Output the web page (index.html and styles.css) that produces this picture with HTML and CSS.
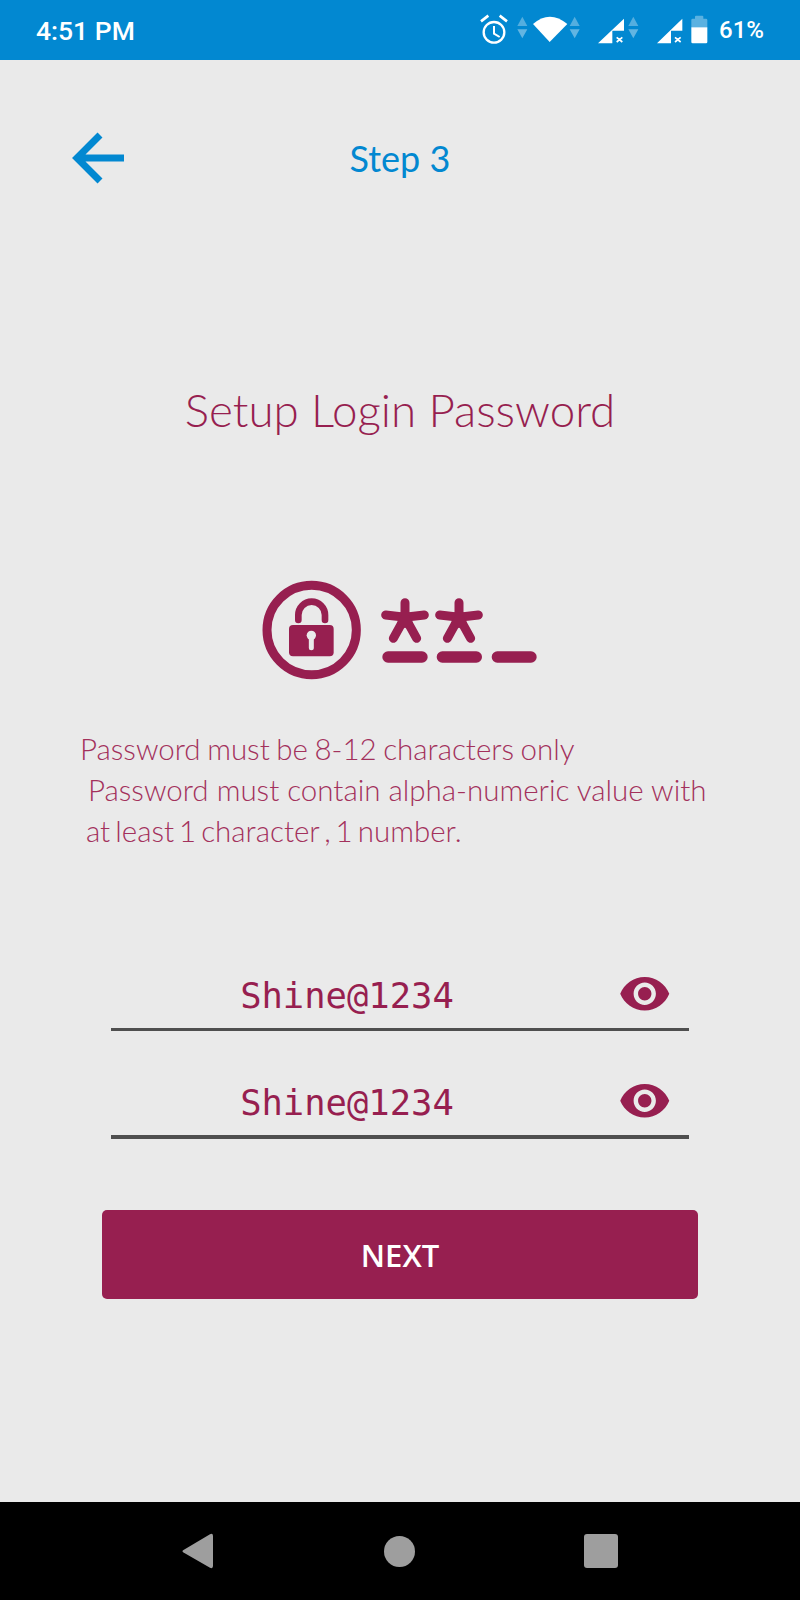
FILE: index.html
```html
<!DOCTYPE html>
<html lang="en">
<head>
<meta charset="utf-8">
<title>Setup Login Password</title>
<link rel="stylesheet" href="styles.css">
</head>
<body>
<div class="phone">
  <div class="status">
    <span class="time">4:51 PM</span>
    <div class="status-right">
      <svg class="status-icons" viewBox="60 0 700 180" aria-hidden="true">
        <g fill="none" stroke="#fff" stroke-width="7">
          <circle cx="105" cy="97" r="31"/>
          <path d="M105 78V101L122 111" stroke-width="6"/>
          <path d="M66 64L88 47M122 47L144 64" stroke-width="8"/>
        </g>
        <g fill="#fff">
          <g opacity=".32"><path d="M190 50L175 78H205Z"/><path d="M347 50L332 78H362Z"/><path d="M523 50L508 78H538Z"/></g>
          <g opacity=".38"><path d="M175 88H205L190 115Z"/><path d="M332 88H362L347 115Z"/><path d="M508 88H538L523 115Z"/></g>
          <path d="M222 72Q272 28 325 72L272 126Z"/>
          <path d="M417 130L495 56V92H460V130Z"/>
          <path d="M594 130L670 56V92H636V130Z"/>
          <path d="M708 56V50Q708 47 711 47H730Q733 47 733 50V56H741Q745 56 745 60V82H697V60Q697 56 701 56Z" opacity=".35"/>
          <path d="M697 82H745V126Q745 130 741 130H701Q697 130 697 126Z"/>
        </g>
        <path d="M473 112L490 126M490 112L473 126M648 112L665 126M665 112L648 126" stroke="#fff" stroke-width="5" fill="none"/>
      </svg>
      <span class="battery">61%</span>
    </div>
  </div>

  <main class="screen">
    <header class="topbar">
      <svg class="back" viewBox="0 0 52 52" aria-hidden="true">
        <path d="M28 3L5 26L28 49M5 26H52" fill="none" stroke="#0288d1" stroke-width="7"/>
      </svg>
      <span class="step">Step 3</span>
    </header>

    <h1 class="title">Setup Login Password</h1>

    <svg class="hero" viewBox="60 60 840 300" aria-hidden="true">
      <circle cx="215" cy="210" r="134" fill="none" stroke="#971f50" stroke-width="27"/>
      <path d="M175 180V165A40 40 0 0 1 255 165V180" fill="none" stroke="#971f50" stroke-width="20" stroke-linecap="round"/>
      <rect x="147" y="195" width="134" height="94" rx="12" fill="#971f50"/>
      <circle cx="214" cy="226" r="14" fill="#eaeaea"/>
      <path d="M214 230V263" stroke="#eaeaea" stroke-width="15" stroke-linecap="round"/>
      <g fill="none" stroke="#971f50" stroke-width="27" stroke-linecap="round">
        <path d="M495 128V172M437 165L495 172L553 165M460 235L495 172L530 235"/>
        <path d="M657 128V172M599 165L657 172L715 165M622 235L657 172L692 235"/>
      </g>
      <g fill="#971f50">
        <path d="M485 165H505L519 188L495 205L471 188Z"/>
        <path d="M647 165H667L681 188L657 205L633 188Z"/>
        <rect x="427" y="274" width="136" height="34" rx="17"/>
        <rect x="590" y="274" width="136" height="34" rx="17"/>
        <rect x="755" y="274" width="135" height="34" rx="17"/>
      </g>
    </svg>

    <div class="rules">
      <p class="rule rule-first">Password must be 8-12 characters only</p>
      <p class="rule rule-a">Password must contain alpha-numeric value with</p>
      <p class="rule rule-b">at least 1 character , 1 number.</p>
    </div>

    <div class="field field-first">
      <span class="value">Shine@1234</span>
      <svg class="eye" viewBox="0 0 24 24" aria-hidden="true"><path d="M12 4.5C7 4.5 2.73 7.61 1 12c1.73 4.39 6 7.5 11 7.5s9.27-3.11 11-7.5c-1.73-4.39-6-7.5-11-7.5zM12 17c-2.76 0-5-2.24-5-5s2.24-5 5-5 5 2.24 5 5-2.24 5-5 5zm0-8c-1.66 0-3 1.34-3 3s1.34 3 3 3 3-1.34 3-3-1.34-3-3-3z"/></svg>
    </div>
    <div class="field field-second">
      <span class="value">Shine@1234</span>
      <svg class="eye" viewBox="0 0 24 24" aria-hidden="true"><path d="M12 4.5C7 4.5 2.73 7.61 1 12c1.73 4.39 6 7.5 11 7.5s9.27-3.11 11-7.5c-1.73-4.39-6-7.5-11-7.5zM12 17c-2.76 0-5-2.24-5-5s2.24-5 5-5 5 2.24 5 5-2.24 5-5 5zm0-8c-1.66 0-3 1.34-3 3s1.34 3 3 3 3-1.34 3-3-1.34-3-3-3z"/></svg>
    </div>

    <button class="next" type="button">NEXT</button>
  </main>

  <nav class="navbar">
    <svg class="nav-back" viewBox="0 0 32 36" aria-hidden="true"><path d="M1.5 17L28 1.2Q31 0 31 3V33Q31 36 28 34.800L1.500 19.500Q-.5 18 1.500 17Z"/></svg>
    <span class="nav-home"></span>
    <span class="nav-recent"></span>
  </nav>
</div>
</body>
</html>
```
FILE: styles.css
```css
* { box-sizing: border-box; }
html, body { margin: 0; padding: 0; }
body { background: #eaeaea; }

.phone {
  width: 800px;
  height: 1600px;
  display: flex;
  flex-direction: column;
  overflow: hidden;
  font-family: Lato, "Liberation Sans", sans-serif;
}

.status {
  height: 60px;
  flex: none;
  background: #0288d1;
  color: #fff;
  display: flex;
  align-items: center;
  justify-content: space-between;
  padding: 0 36px;
  font-family: Roboto, sans-serif;
}
.time { font-size: 26.5px; font-weight: 500; }
.status-right { display: flex; align-items: center; }
.status-icons { width: 233.33px; height: 60px; display: block; margin-right: 7px; }
.battery { font-size: 24px; font-weight: 500; }

.screen {
  flex: 1;
  display: flex;
  flex-direction: column;
  align-items: center;
  background: #eaeaea;
}

.topbar {
  align-self: stretch;
  display: grid;
  grid-template-columns: 1fr auto 1fr;
  align-items: center;
  height: 52px;
  margin-top: 72px;
  padding-left: 72px;
  padding-right: 72px;
}
.back { width: 52px; height: 52px; display: block; }
.step { color: #0288d1; font-size: 36px; font-weight: 400; }

.title {
  margin: 198px 0 0;
  color: #971f50;
  font-size: 45.7px;
  line-height: 56px;
  font-weight: 300;
}

.hero {
  width: 280px;
  height: 100px;
  display: block;
  margin-top: 142px;
}

.rules {
  align-self: stretch;
  margin-top: 48px;
  padding-left: 80px;
  color: #a3315c;
  font-size: 29.5px;
  line-height: 41px;
  font-weight: 300;
}
.rule { margin: 0; }
.rule-first { word-spacing: -1.5px; }
.rule-a { padding-left: 8px; }
.rule-b { padding-left: 6px; word-spacing: -3px; }

.field {
  width: 578px;
  display: flex;
  align-items: center;
  color: #971f50;
  border-bottom: 3px solid #4f4f4f;
  padding-right: 18px;
}
.field-first { margin-top: 120px; height: 60px; padding-bottom: 11px; }
.field-second { margin-top: 46px; height: 62px; padding-bottom: 10px; border-bottom-width: 4px; }

.value {
  width: 472px;
  padding-top: 2px;
  text-align: center;
  font-family: "DejaVu Sans Mono", monospace;
  font-size: 35.5px;
}

.eye {
  width: 53.5px;
  height: 53.5px;
  margin-left: auto;
  flex: none;
  fill: #971f50;
}

.next {
  width: 596px;
  height: 89px;
  margin-top: 71px;
  border: 0;
  border-radius: 5px;
  background: #971f50;
  color: #fff;
  font-family: "Open Sans", sans-serif;
  font-size: 31px;
  font-weight: 600;
}

.navbar {
  height: 98px;
  flex: none;
  background: #000;
  display: flex;
  align-items: center;
  justify-content: center;
}
.nav-back { width: 32px; height: 36px; fill: #9e9e9e; }
.nav-home { width: 31px; height: 31px; margin: 0 169px 0 170px; border-radius: 50%; background: #9e9e9e; }
.nav-recent { width: 34px; height: 34px; border-radius: 3px; background: #9e9e9e; }
```
